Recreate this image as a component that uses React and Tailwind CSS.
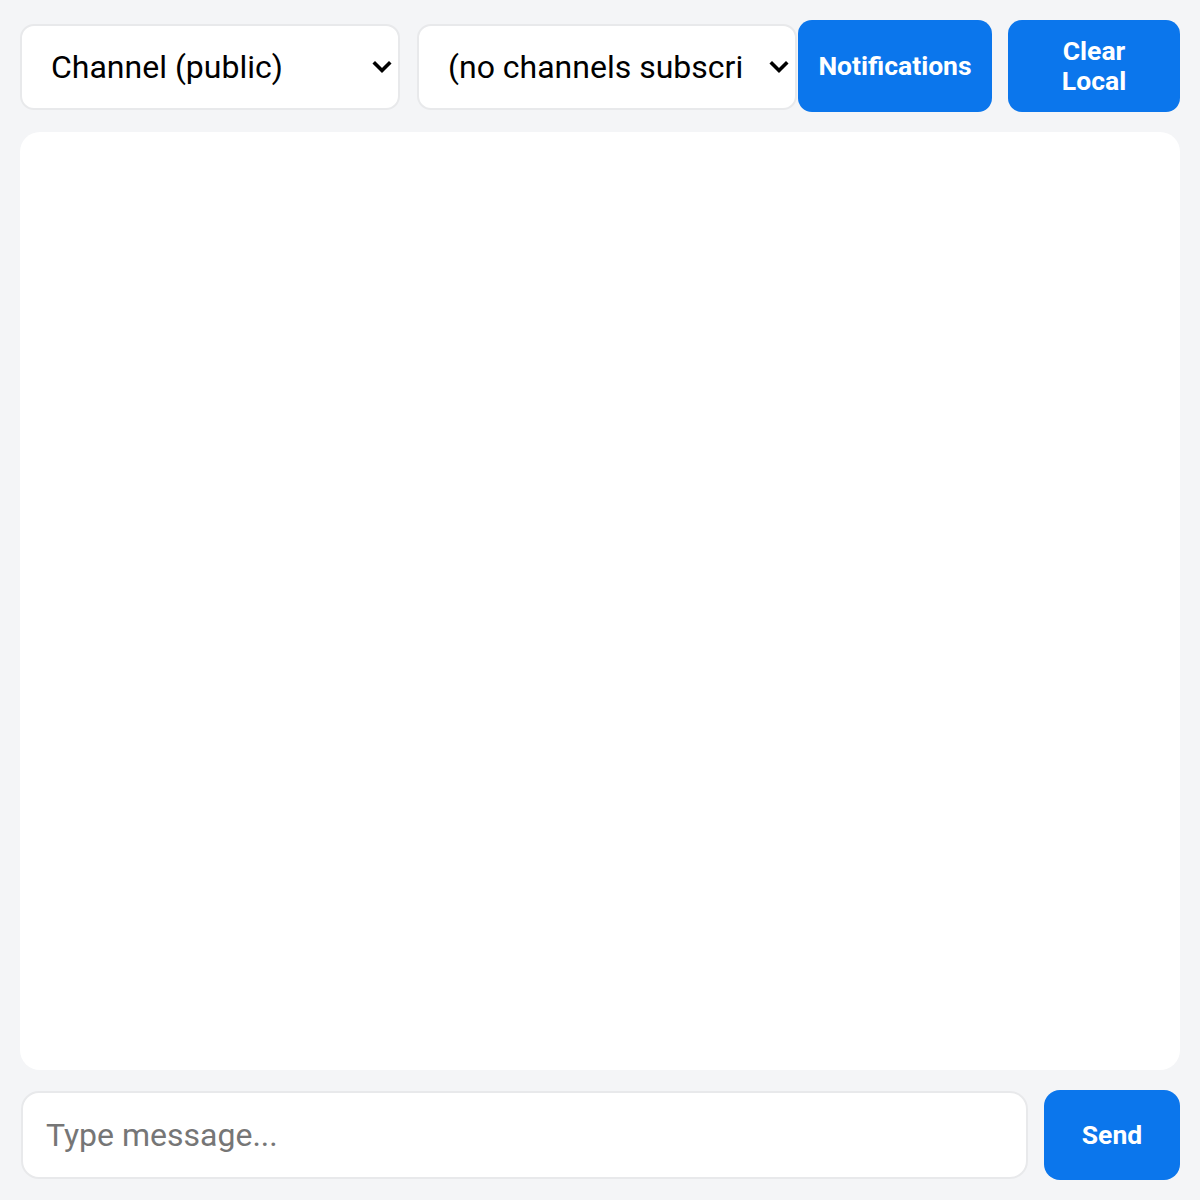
import React, { useState } from "react";

const Chevron = () => (
  <svg
    className="pointer-events-none absolute right-[8px] top-1/2 -translate-y-1/2"
    width="20"
    height="14"
    viewBox="0 0 20 14"
    fill="none"
  >
    <path d="M3 3.5 10 10.5l7-7" stroke="#000" strokeWidth="3.6" strokeLinecap="square" strokeLinejoin="miter" />
  </svg>
);

const Select = ({ value, options, onChange }) => (
  <div className="relative w-[380px] h-[86px] mt-[4px]">
    <select
      value={value}
      onChange={(e) => onChange(e.target.value)}
      className="appearance-none w-full h-full rounded-[14px] border-2 border-[#e8e9eb] bg-white pl-[29px] pr-[52px] text-[32px] text-black outline-none"
    >
      {options.map((o) => (
        <option key={o}>{o}</option>
      ))}
    </select>
    <Chevron />
  </div>
);

export default function App() {
  const [channel, setChannel] = useState("Channel (public)");
  const [sub, setSub] = useState("(no channels subscribed)");
  const [text, setText] = useState("");

  return (
    <div className="w-[1200px] h-[1200px] bg-[#f4f5f7] p-[20px] flex flex-col font-['Roboto',sans-serif]">
      <div className="flex items-start h-[92px]">
        <Select value={channel} options={["Channel (public)", "Direct message"]} onChange={setChannel} />
        <div className="w-[17px]" />
        <Select value={sub} options={["(no channels subscribed)"]} onChange={setSub} />
        <button className="ml-[1px] w-[194px] h-[92px] rounded-[14px] bg-[#0b76ec] text-white font-bold text-[26.5px]">
          Notifications
        </button>
        <button className="ml-[16px] w-[172px] h-[92px] rounded-[14px] bg-[#0b76ec] text-white font-bold text-[26.5px] leading-[30px] px-[40px]">
          Clear Local
        </button>
      </div>

      <div className="mt-[20px] flex-1 rounded-[20px] bg-white" />

      <div className="mt-[20px] flex items-center gap-[16px] h-[90px]">
        <input
          value={text}
          onChange={(e) => setText(e.target.value)}
          placeholder="Type message..."
          className="flex-1 h-[88px] ml-[1px] rounded-[18px] border-2 border-[#e8e9eb] bg-white px-[23px] text-[32px] text-black placeholder:text-[#767676] outline-none"
        />
        <button className="w-[136px] h-[90px] rounded-[16px] bg-[#0b76ec] text-white font-bold text-[26.5px]">
          Send
        </button>
      </div>
    </div>
  );
}
